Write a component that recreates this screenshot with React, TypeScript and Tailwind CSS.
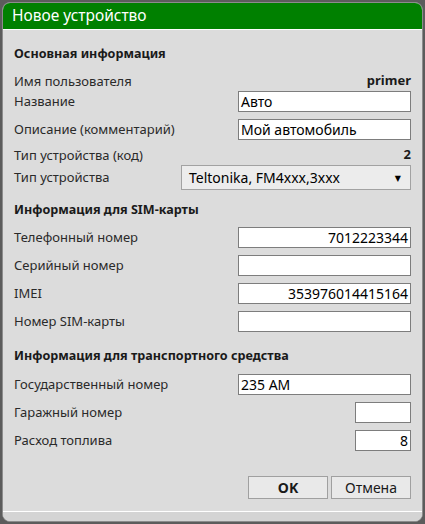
import React from "react";

const F = { fontFamily: '"Noto Sans", "DejaVu Sans", sans-serif' };

function Label({ children }: { children: React.ReactNode }) {
  return <span className="text-[13px] text-[#2a2a2a] leading-none">{children}</span>;
}

function Field({
  label,
  value = "",
  right = false,
  small = false,
  mt,
}: {
  label: string;
  value?: string;
  right?: boolean;
  small?: boolean;
  mt: string;
}) {
  return (
    <div className={`flex h-[21px] items-center justify-between ${mt}`}>
      <Label>{label}</Label>
      <div
        className={`flex h-[21px] items-center border border-[#7d7d7d] bg-white px-[2px] text-[14px] text-black ${
          small ? "w-[56px]" : "w-[173px]"
        } ${right ? "justify-end" : "justify-start"}`}
      >
        {value}
      </div>
    </div>
  );
}

function Header({ children, mt }: { children: React.ReactNode; mt: string }) {
  return (
    <div className={`flex h-[20px] items-center ${mt}`}>
      <span className="text-[12.6px] font-bold text-[#1a1a1a]">{children}</span>
    </div>
  );
}

export default function App() {
  return (
    <div className="h-[524px] w-[425px] bg-[#5c5c5c] p-[2px]" style={F}>
      <div className="flex h-[520px] flex-col overflow-hidden rounded-[8px] border border-[#8c8c8c] bg-[#dcdcdc]">
        <div className="flex h-[27px] items-center border-b border-white bg-[#008000] pl-[9px] text-[15.5px] text-white">
          Новое устройство
        </div>
        <div className="flex flex-1 flex-col px-[11px]">
          <Header mt="mt-[14px]">Основная информация</Header>
          <div className="mt-[8px] flex h-[18px] items-center justify-between">
            <Label>Имя пользователя</Label>
            <span className="text-[13px] font-bold text-[#1a1a1a]">primer</span>
          </div>
          <Field mt="mt-[1px]" label="Название" value="Авто" />
          <Field mt="mt-[7px]" label="Описание (комментарий)" value="Мой автомобиль" />
          <div className="mt-[6px] flex h-[18px] items-center justify-between">
            <Label>Тип устройства (код)</Label>
            <span className="text-[13px] font-bold text-[#1a1a1a]">2</span>
          </div>
          <div className="mt-[1px] flex h-[25px] items-center justify-between">
            <Label>Тип устройства</Label>
            <div className="flex h-[25px] w-[230px] items-center justify-between border border-[#a2a2a2] bg-[#ececec] pl-[7px] pr-[9px] text-[14px] text-black">
              <span>Teltonika, FM4xxx,3xxx</span>
              <span className="text-[8px]">▼</span>
            </div>
          </div>
          <Header mt="mt-[10px]">Информация для SIM-карты</Header>
          <Field mt="mt-[7px]" label="Телефонный номер" value="7012223344" right />
          <Field mt="mt-[7px]" label="Серийный номер" />
          <Field mt="mt-[7px]" label="IMEI" value="353976014415164" right />
          <Field mt="mt-[7px]" label="Номер SIM-карты" />
          <Header mt="mt-[14px]">Информация для транспортного средства</Header>
          <Field mt="mt-[8px]" label="Государственный номер" value="235 АМ" />
          <Field mt="mt-[7px]" label="Гаражный номер" small />
          <Field mt="mt-[7px]" label="Расход топлива" value="8" right small />
          <div className="mt-[25px] flex justify-end gap-[3px]">
            <button className="h-[23px] w-[80px] border border-[#a0a0a0] bg-[#e9e9e9] text-[14px] font-bold text-[#1a1a1a]">
              OK
            </button>
            <button className="h-[23px] w-[80px] border border-[#a0a0a0] bg-[#e9e9e9] text-[14px] text-[#1a1a1a]">
              Отмена
            </button>
          </div>
        </div>
        <div className="h-[10px] border-t border-white bg-[#d4d4d4]" />
      </div>
    </div>
  );
}
